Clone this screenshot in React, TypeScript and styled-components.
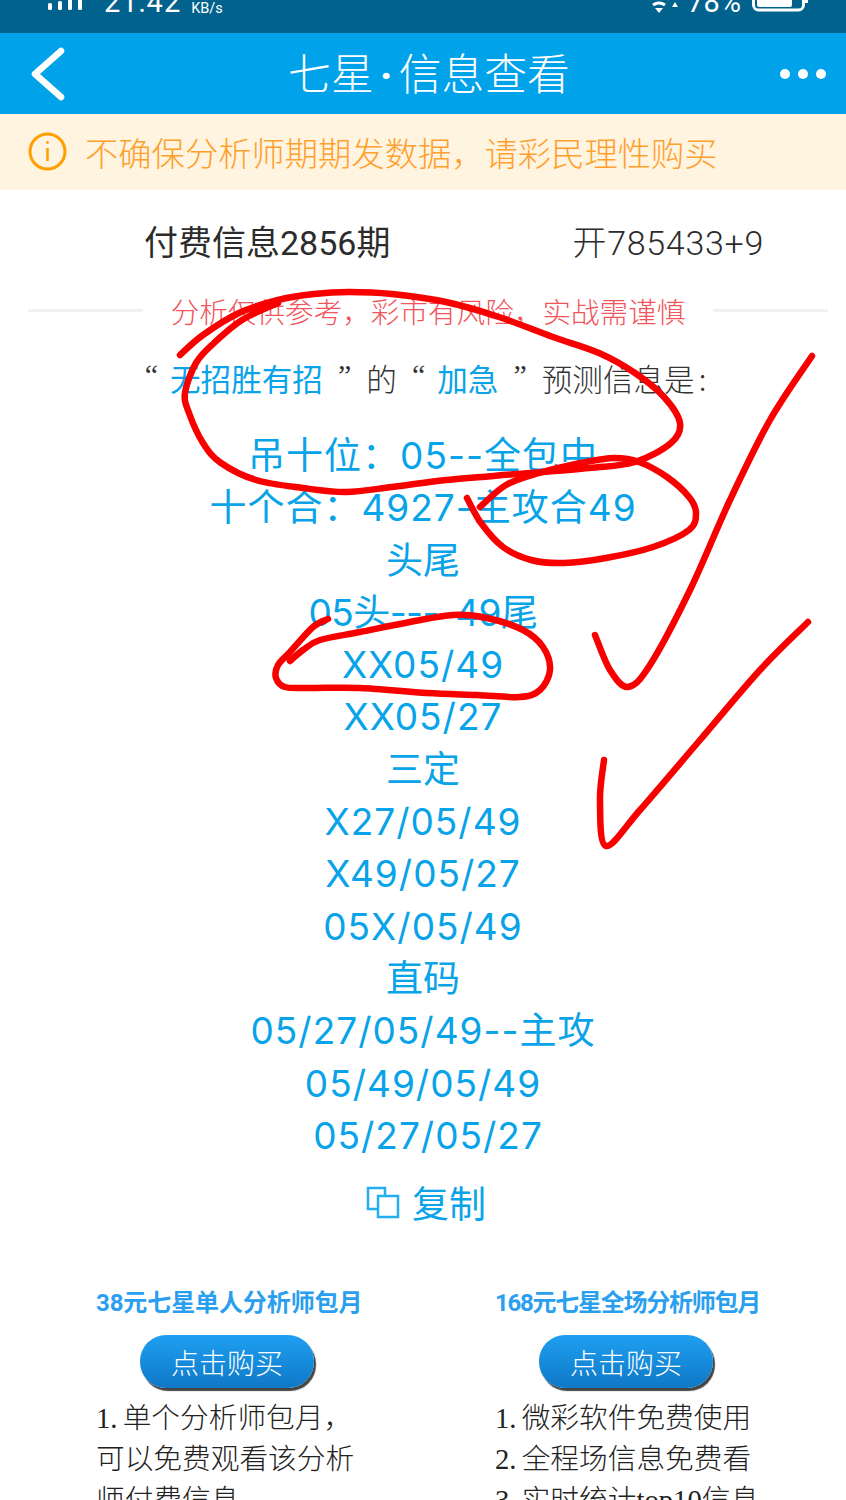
import React from "react";
import styled, { createGlobalStyle } from "styled-components";

const Global = createGlobalStyle`
  html, body { margin: 0; padding: 0; height: 1500px; overflow: hidden; background: #fff; }
  * { box-sizing: border-box; }
  body { font-family: "Roboto", "Noto Sans CJK SC", sans-serif; }
`;

const Page = styled.div`
  position: relative;
  width: 846px;
  height: 1500px;
  overflow: hidden;
  background: #fff;
`;

const StatusBar = styled.div`
  height: 33px;
  background: #01628e;
  color: #fff;
  display: flex;
  justify-content: space-between;
  padding: 0 38px 0 48px;
  overflow: hidden;
`;
const StatusGroup = styled.div`
  display: flex;
  align-items: flex-start;
  margin-top: -11px;
  height: 30px;
`;
const Clock = styled.span`
  font-size: 29px;
  line-height: 30px;
  margin: -2px 0 0 22px;
  letter-spacing: 1px;
`;
const Speed = styled.span`
  font-size: 14.5px;
  line-height: 14px;
  margin: 13px 0 0 10px;
`;
const Battery = styled.span`
  font-size: 29px;
  line-height: 30px;
  margin: -2px 11px 0 8px;
`;

const Header = styled.header`
  height: 81px;
  background: #00a2ea;
  display: flex;
  align-items: center;
  justify-content: space-between;
  padding: 0 20px 0 30px;
  color: #fff;
`;
const Title = styled.h1`
  margin: 0 0 0 8px;
  font-size: 42.8px;
  font-weight: 300;
  line-height: 81px;
  font-family: "Noto Sans CJK SC", sans-serif;
`;
const TitleDot = styled.span`
  display: inline-block;
  width: 25px;
  text-align: center;
  font-family: "Roboto", sans-serif;
  font-weight: 700;
`;

const Notice = styled.div`
  height: 76px;
  background: #fff4e0;
  display: flex;
  align-items: center;
  padding: 0 0 2px 28px;
  gap: 18px;
  color: #ff9f2e;
  font-size: 33.3px;
  font-weight: 300;
  font-family: "Noto Sans CJK SC", sans-serif;
`;

const Issue = styled.div`
  height: 98px;
  padding: 25px 82px 0 144px;
  display: flex;
  justify-content: space-between;
  font-size: 34px;
  line-height: 56px;
  color: #2c2c2c;
  font-weight: 300;
`;
const IssueLabel = styled.span`
  font-weight: 400;
`;
const IssueResult = styled.span`
  letter-spacing: 0.7px;
`;

const Divider = styled.div`
  display: flex;
  align-items: center;
  padding: 0 18px 0 28px;
  height: 44px;
  color: #f2545b;
  font-size: 28.6px;
  font-weight: 300;
  font-family: "Noto Sans CJK SC", sans-serif;
`;
const Rule = styled.span`
  flex: 1;
  height: 3px;
  background: #f1f1f1;
`;
const DividerText = styled.span`
  margin: 0 28px;
  white-space: nowrap;
`;

const Predict = styled.div`
  margin-top: 23px;
  height: 46px;
  display: flex;
  justify-content: center;
  align-items: center;
  font-size: 30.6px;
  line-height: 46px;
  font-weight: 300;
  color: #333;
  white-space: nowrap;
  padding-right: 10px;
  font-family: "Noto Sans CJK SC", sans-serif;
`;
const Quote = styled.span<{ $side: "open" | "close" }>`
  font-family: "Liberation Serif", serif;
  font-size: 30px;
  margin: ${(p) => (p.$side === "open" ? "-6px 12px 0 15px" : "-6px 15px 0 15px")};
`;
const Tag = styled.span`
  color: #08a3e8;
  font-weight: 400;
`;
const Colon = styled.span`
  margin-left: 4px;
`;

const Lines = styled.div`
  margin-top: 29px;
  text-align: center;
  color: #08a3e8;
  font-family: "Inter", "Noto Sans CJK SC", sans-serif;
  font-size: 37px;
  line-height: 52.3px;
  font-weight: 400;
`;
const Line = styled.div<{ $shift?: number; $spacing?: number }>`
  height: 52.3px;
  white-space: nowrap;
  letter-spacing: ${(p) => p.$spacing ?? 1}px;
  padding-left: ${(p) => p.$shift ?? 0}px;
`;

const Copy = styled.div`
  margin-top: 14px;
  height: 52px;
  display: flex;
  justify-content: center;
  align-items: center;
  gap: 12px;
  color: #08a3e8;
  font-size: 37px;
  font-weight: 400;
  font-family: "Noto Sans CJK SC", sans-serif;
  padding-left: 6px;
`;

const Plans = styled.div`
  margin-top: 51px;
  display: grid;
  grid-template-columns: 399px 290px;
  padding-left: 96px;
`;
const Plan = styled.section`
  width: 266px;
`;
const PlanTitle = styled.h2<{ $tight?: boolean }>`
  margin: 0;
  height: 48px;
  font-size: 24px;
  line-height: 48px;
  color: #2b9fef;
  font-weight: 700;
  white-space: nowrap;
  letter-spacing: ${(p) => (p.$tight ? "-1.25px" : "-0.1px")};
`;
const Buy = styled.button`
  display: block;
  width: 174px;
  height: 53px;
  margin: 8px 0 0 44px;
  border: 0;
  border-radius: 26px;
  background: linear-gradient(#1f9ff2, #0f78c6);
  box-shadow: 2px 3px 1px #444;
  color: #fff;
  font-size: 28px;
  font-weight: 300;
  font-family: "Noto Sans CJK SC", sans-serif;
  padding: 0;
`;
const PlanText = styled.p`
  margin: 10px 0 0;
  font-size: 28.7px;
  line-height: 41px;
  color: #222;
  font-weight: 300;
  font-family: "Liberation Serif", "Noto Sans CJK SC", serif;
  width: 290px;
  word-spacing: -2px;
`;

const Ink = styled.svg`
  position: absolute;
  inset: 0;
  pointer-events: none;
`;

const smooth = (p: number[][]) => {
  let d = `M${p[0][0]} ${p[0][1]}`;
  for (let i = 0; i < p.length - 1; i++) {
    const a = p[Math.max(i - 1, 0)], b = p[i], c = p[i + 1], e = p[Math.min(i + 2, p.length - 1)];
    d += ` C${b[0] + (c[0] - a[0]) / 6} ${b[1] + (c[1] - a[1]) / 6} ${c[0] - (e[0] - b[0]) / 6} ${c[1] - (e[1] - b[1]) / 6} ${c[0]} ${c[1]}`;
  }
  return d;
};

const strokes = [
  [[180,355],[203,335],[239,313],[278,300],[314,294],[349,292],[392,294],[446,302],[499,317],[553,337],[599,353],[635,373],[664,397],[680,423],[671,443],[635,462],[589,468],[517,474],[446,480],[392,487],[346,492],[303,488],[256,480],[221,463],[203,443],[189,413],[185,393],[196,363],[214,343],[242,320],[278,303]],
  [[467,498],[481,523],[503,547],[531,560],[564,563],[606,558],[653,547],[689,530],[696,513],[689,497],[667,477],[639,462],[614,458],[581,463],[539,473],[506,485],[480,507]],
  [[328,619],[313,627],[290,652],[278,665],[276,678],[285,687],[310,688],[360,688],[427,693],[477,695],[520,697],[540,690],[550,670],[543,647],[523,630],[487,618],[453,615],[410,622],[360,632],[320,640],[303,650],[290,661]],
  [[595,635],[610,670],[628,687],[650,665],[690,590],[730,500],[770,420],[812,356]],
  [[604,760],[600,800],[606,846],[640,810],[700,740],[760,670],[808,622]],
];

const lines: { text: string; shift?: number; spacing?: number }[] = [
  { text: "吊十位：05--全包中" },
  { text: "十个合：4927-主攻合49" },
  { text: "头尾", spacing: 0 },
  { text: "05头----49尾", spacing: -0.6 },
  { text: "XX05/49" },
  { text: "XX05/27" },
  { text: "三定", spacing: 0 },
  { text: "X27/05/49" },
  { text: "X49/05/27" },
  { text: "05X/05/49" },
  { text: "直码", spacing: 0 },
  { text: "05/27/05/49--主攻" },
  { text: "05/49/05/49" },
  { text: "05/27/05/27", shift: 10 },
];

export default function App() {
  return (
    <Page>
      <Global />
      <StatusBar>
        <StatusGroup>
          <svg width="34" height="22" viewBox="0 0 34 22" fill="#fff">
            <rect x="0" y="14" width="4" height="7" rx="1.5" />
            <rect x="10" y="12" width="4" height="9" rx="1.5" />
            <rect x="20" y="6" width="4" height="15" rx="1.5" />
            <rect x="30" y="2" width="4" height="19" rx="1.5" />
          </svg>
          <Clock>21:42</Clock>
          <Speed>KB/s</Speed>
        </StatusGroup>
        <StatusGroup>
          <svg width="32" height="25" viewBox="0 0 32 25" fill="none" stroke="#fff" strokeWidth="3">
            <path d="M2 10 Q12 4 22 10" />
            <path d="M6 16 Q12 12 18 16" />
            <path d="M8 19 L12 24 L16 19 Z" fill="#fff" stroke="none" />
            <path d="M25 18 L28 13 L31 18 Z" fill="#fff" stroke="none" />
          </svg>
          <Battery>78%</Battery>
          <svg width="56" height="24" viewBox="0 0 56 24" fill="none">
            <rect x="1.5" y="1.5" width="50" height="19.5" rx="5" stroke="#fff" strokeWidth="3" />
            <rect x="5" y="4" width="35" height="14" rx="2" fill="#fff" />
            <rect x="53" y="6" width="3" height="8" fill="#fff" />
          </svg>
        </StatusGroup>
      </StatusBar>

      <Header>
        <svg width="40" height="60" viewBox="0 0 40 60" fill="none" stroke="#fff" strokeWidth="6.5" strokeLinecap="round" strokeLinejoin="round">
          <path d="M31 7 L5 30 L31 53" />
        </svg>
        <Title>七星<TitleDot>·</TitleDot>信息查看</Title>
        <svg width="46" height="12" viewBox="0 0 46 12" fill="#fff">
          <circle cx="5" cy="6" r="5" /><circle cx="23" cy="6" r="5" /><circle cx="41" cy="6" r="5" />
        </svg>
      </Header>

      <Notice>
        <svg width="39" height="39" viewBox="0 0 39 39" fill="none" stroke="#ff9f00" strokeWidth="3">
          <circle cx="19.5" cy="19.5" r="17.5" />
          <path d="M19.5 16 V29" strokeWidth="2.5" />
          <circle cx="19.5" cy="10.5" r="1.4" fill="#ff9f00" stroke="none" />
        </svg>
        <span>不确保分析师期期发数据，请彩民理性购买</span>
      </Notice>

      <Issue>
        <IssueLabel>付费信息2856期</IssueLabel>
        <IssueResult>开785433+9</IssueResult>
      </Issue>

      <Divider>
        <Rule />
        <DividerText>分析仅供参考，彩市有风险，实战需谨慎</DividerText>
        <Rule />
      </Divider>

      <Predict>
        <Quote $side="open">“</Quote>
        <Tag>无招胜有招</Tag>
        <Quote $side="close">”</Quote>
        的
        <Quote $side="open">“</Quote>
        <Tag>加急</Tag>
        <Quote $side="close">”</Quote>
        预测信息是<Colon>:</Colon>
      </Predict>

      <Lines>
        {lines.map((l) => <Line key={l.text} $shift={l.shift} $spacing={l.spacing}>{l.text}</Line>)}
      </Lines>

      <Copy>
        <svg width="34" height="33" viewBox="0 0 34 33" fill="none" stroke="#23aeee" strokeWidth="2.5">
          <path d="M12 23 H2 V2 H19 V10" />
          <rect x="12" y="10" width="20" height="21" />
        </svg>
        <span>复制</span>
      </Copy>

      <Plans>
        <Plan>
          <PlanTitle>38元七星单人分析师包月</PlanTitle>
          <Buy>点击购买</Buy>
          <PlanText>1. 单个分析师包月，<br />可以免费观看该分析<br />师付费信息</PlanText>
        </Plan>
        <Plan>
          <PlanTitle $tight>168元七星全场分析师包月</PlanTitle>
          <Buy>点击购买</Buy>
          <PlanText>1. 微彩软件免费使用<br />2. 全程场信息免费看<br />3. 实时统计top10信息</PlanText>
        </Plan>
      </Plans>

      <Ink width="846" height="1500" viewBox="0 0 846 1500" fill="none" stroke="#f80000" strokeWidth="6.5" strokeLinecap="round" strokeLinejoin="round">
        {strokes.map((s, i) => <path key={i} d={smooth(s)} />)}
      </Ink>
    </Page>
  );
}
